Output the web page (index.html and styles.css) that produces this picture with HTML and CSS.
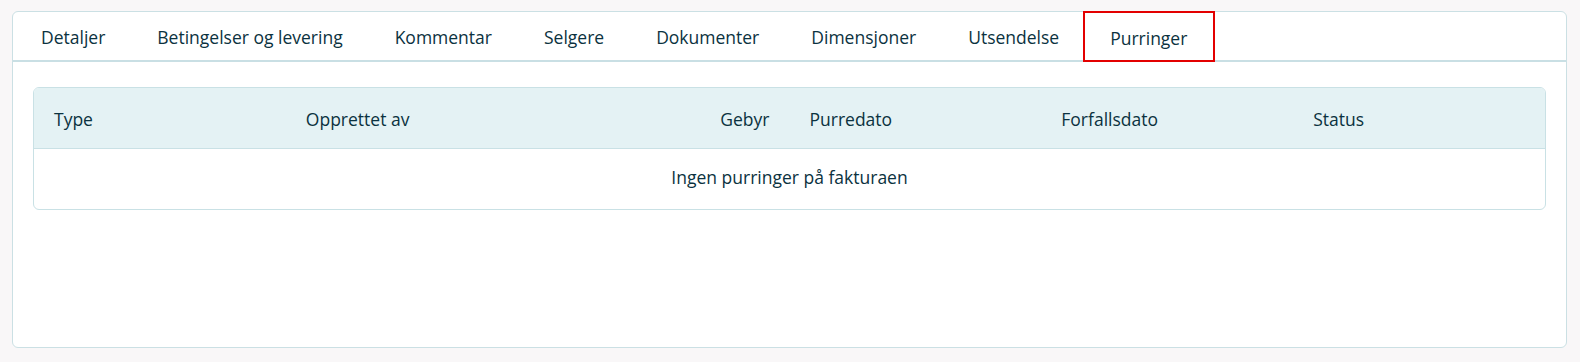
FILE: index.html
```html
<!DOCTYPE html>
<html lang="nb">
<head>
    <meta charset="UTF-8">
    <meta name="viewport" content="width=device-width, initial-scale=1.0">
    <title>Faktura - Purringer</title>
    <link rel="stylesheet" href="styles.css">
</head>
<body>
    <div class="card">
        <!-- Tabs -->
        <nav class="tabs">
            <a class="tab">Detaljer</a>
            <a class="tab">Betingelser og levering</a>
            <a class="tab">Kommentar</a>
            <a class="tab">Selgere</a>
            <a class="tab">Dokumenter</a>
            <a class="tab">Dimensjoner</a>
            <a class="tab">Utsendelse</a>
            <a class="tab active">Purringer</a>
        </nav>

        <div class="tab-content">
            <div class="table-wrap">
                <table class="reminders">
                    <thead>
                        <tr>
                            <th>Type</th>
                            <th>Opprettet av</th>
                            <th class="num">Gebyr</th>
                            <th>Purredato</th>
                            <th>Forfallsdato</th>
                            <th>Status</th>
                        </tr>
                    </thead>
                    <tbody>
                        <tr>
                            <td colspan="6" class="empty">Ingen purringer på fakturaen</td>
                        </tr>
                    </tbody>
                </table>
            </div>
        </div>
    </div>
</body>
</html>
```

FILE: styles.css
```css
/* styles.css */

body {
    background-color: #f9f7f8;
    font-family: 'Open Sans', 'Noto Sans', sans-serif;
    color: #0b3240;
    margin: 0;
    padding: 11px 13px 14px 12px;
}

.card {
    background-color: #fff;
    border: 1px solid #cbe0e4;
    border-radius: 6px;
    height: 335px;
}

/* Tab bar */
.tabs {
    display: flex;
    height: 48px;
    border-bottom: 2px solid #c9dfe4;
    padding-left: 2px;
}

.tab {
    display: flex;
    align-items: center;
    padding: 2px 26px 0;
    font-size: 17.5px;
    cursor: pointer;
    box-sizing: border-box;
}

.tab:nth-child(7) {
    padding-right: 24px;
}

.tab.active {
    border: 2px solid #e30000;
    margin: -1px 0 -2px;
    padding: 3px 26px 1px 25px;
}

/* Content */
.tab-content {
    padding: 25px 20px;
}

.table-wrap {
    border: 1px solid #c9e1e5;
    border-radius: 6px;
    overflow: hidden;
}

.reminders {
    width: 100%;
    border-collapse: collapse;
    table-layout: fixed;
}

.reminders th {
    background-color: #e4f2f4;
    font-weight: normal;
    text-align: left;
    font-size: 17.5px;
    height: 59px;
    padding: 1px 20px 0;
    border-bottom: 1px solid #c9e1e5;
}

.reminders th.num {
    text-align: right;
}

.reminders td.empty {
    text-align: center;
    font-size: 17.5px;
    height: 56px;
    padding: 0 20px 4px;
}
```
